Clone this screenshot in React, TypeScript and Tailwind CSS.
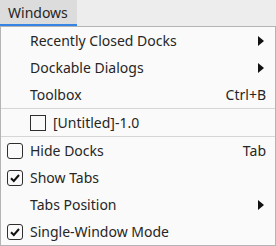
import React from "react";

type Item =
  | { kind: "sep" }
  | {
      kind: "item";
      label: string;
      check?: "on" | "off";
      box?: boolean;
      submenu?: boolean;
      accel?: string;
    };

const items: Item[] = [
  { kind: "item", label: "Recently Closed Docks", submenu: true },
  { kind: "item", label: "Dockable Dialogs", submenu: true },
  { kind: "item", label: "Toolbox", accel: "Ctrl+B" },
  { kind: "sep" },
  { kind: "item", label: "[Untitled]-1.0", box: true },
  { kind: "sep" },
  { kind: "item", label: "Hide Docks", check: "off", accel: "Tab" },
  { kind: "item", label: "Show Tabs", check: "on" },
  { kind: "item", label: "Tabs Position", submenu: true },
  { kind: "item", label: "Single-Window Mode", check: "on" },
];

function CheckBox({ on }: { on: boolean }) {
  return (
    <span className="flex size-[16px] items-center justify-center rounded-[3px] border border-[#2e2e2e]">
      {on && (
        <svg width="12" height="12" viewBox="0 0 12 12">
          <path d="M2 6.2 L4.8 9 L10 3" fill="none" stroke="#111" strokeWidth="2" />
        </svg>
      )}
    </span>
  );
}

function Arrow() {
  return (
    <svg width="6" height="10" viewBox="0 0 6 10">
      <path d="M0 0 L6 5 L0 10 Z" fill="#111" />
    </svg>
  );
}

function MenuRow({ item }: { item: Extract<Item, { kind: "item" }> }) {
  return (
    <div className="flex h-[27px] items-center pr-[9px] text-[14px] text-[#262626]">
      <div className="flex w-[29px] shrink-0 justify-start pl-[6px]">
        {item.check && <CheckBox on={item.check === "on"} />}
      </div>
      {item.box && <span className="mr-[7px] size-[16px] border border-[#2e2e2e]" />}
      <span className="flex-1">{item.label}</span>
      {item.accel && <span>{item.accel}</span>}
      {item.submenu && (
        <span className="mr-[2px] flex items-center">
          <Arrow />
        </span>
      )}
    </div>
  );
}

export default function App() {
  return (
    <div className="h-[246px] w-[276px] bg-[#ededed] font-['Noto_Sans',sans-serif]">
      <div className="flex h-[26px]">
        <div className="flex h-[26px] w-[77px] items-center border-b-2 border-[#3584e4] bg-[#dcdcdc] pl-[8px] text-[14px] text-[#262626]">
          Windows
        </div>
      </div>
      <div className="flex h-[220px] flex-col border border-[#b4b4b4] bg-[#fafafa]">
        {items.map((it, i) =>
          it.kind === "sep" ? (
            <div key={i} className="h-px bg-[#d6d6d6]" />
          ) : (
            <MenuRow key={i} item={it} />
          )
        )}
      </div>
    </div>
  );
}
